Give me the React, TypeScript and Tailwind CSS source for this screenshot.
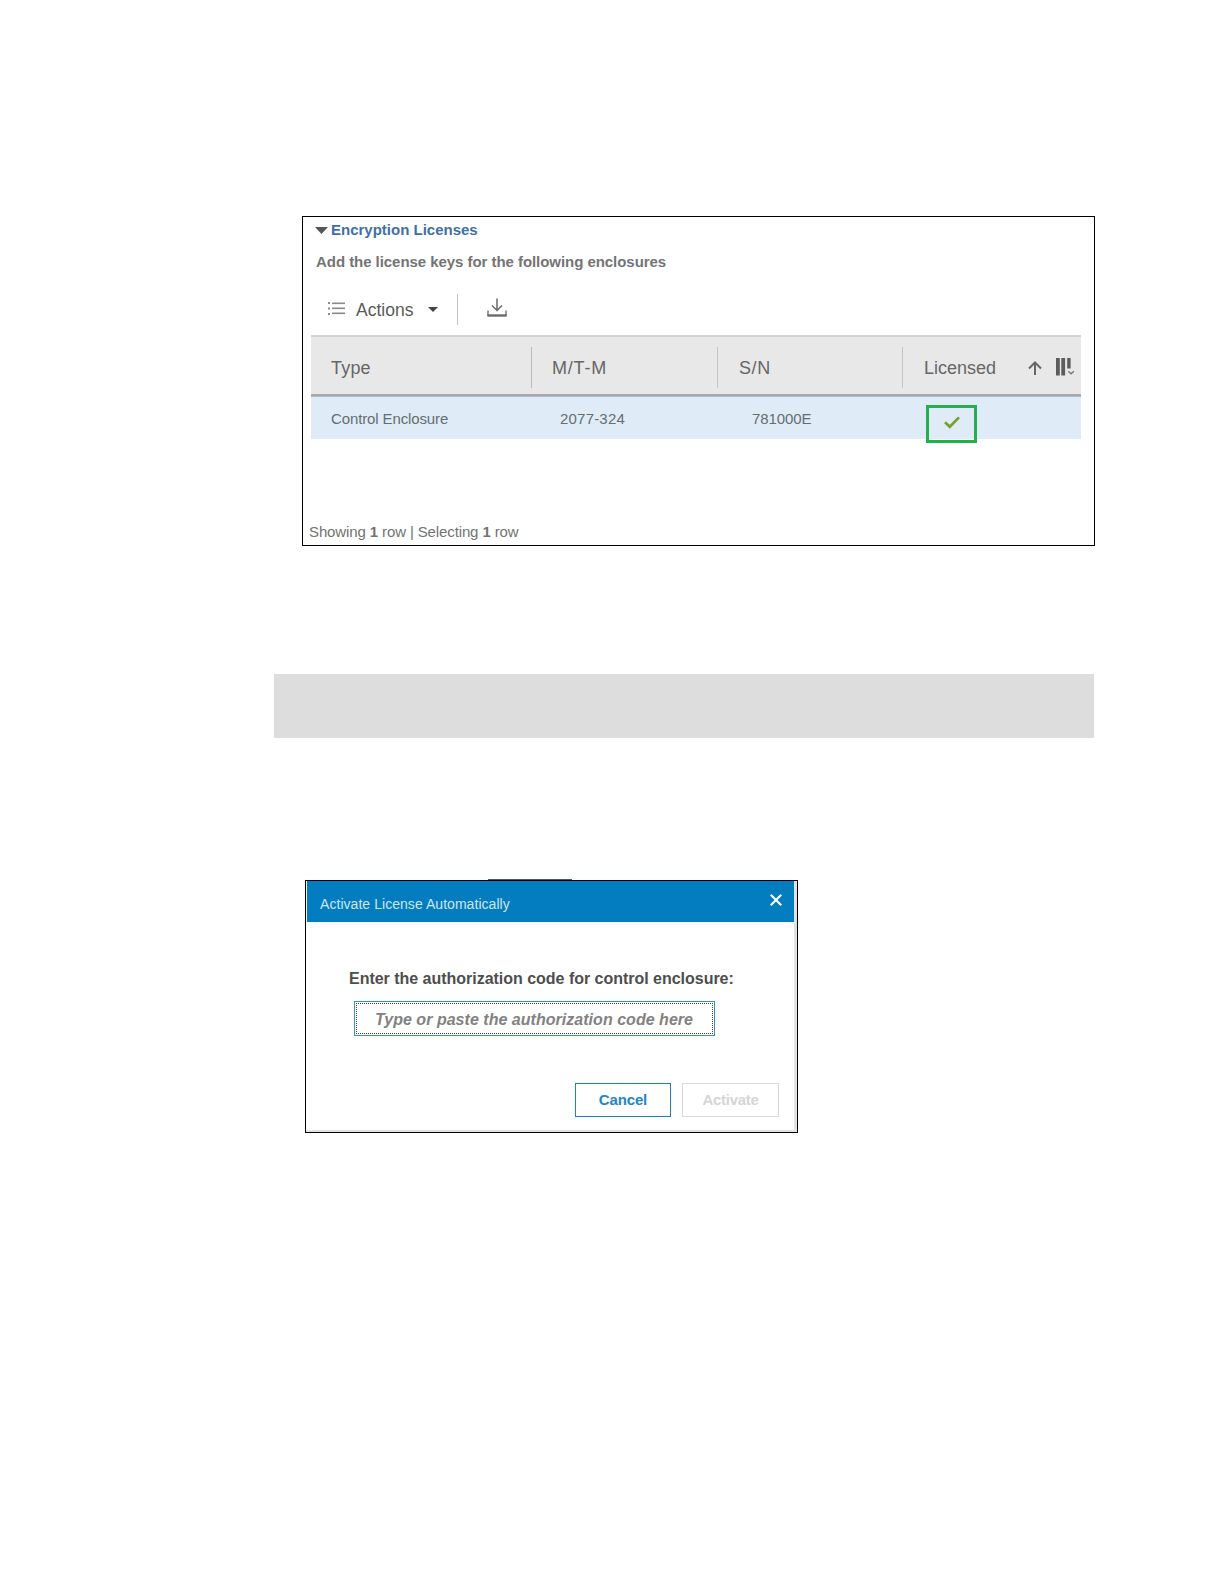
import React from 'react';

const ListIcon = () => (
  <svg width="18" height="15" viewBox="0 0 18 15" fill="#8a8a8a">
    <rect x="0" y="0" width="2" height="2" />
    <rect x="0" y="5.5" width="2" height="2" />
    <rect x="0" y="11" width="2" height="2" />
    <rect x="4" y="0.5" width="13" height="1.6" />
    <rect x="4" y="5.5" width="13" height="1.6" />
    <rect x="4" y="10.5" width="13" height="1.6" />
  </svg>
);

const DownloadIcon = () => (
  <svg width="20" height="20" viewBox="0 0 20 20" fill="none" stroke="#6a6a6a">
    <path d="M10 .5v12M5 7.5l5 5 5-5" strokeWidth="1.5" />
    <path d="M1 12.5v5.2M19 12.5v5.2" strokeWidth="1.3" />
    <path d="M.4 17.5h19.2" strokeWidth="2.4" />
  </svg>
);

const ArrowUpIcon = () => (
  <svg width="14" height="14" viewBox="0 0 14 14" fill="none" stroke="#666" strokeWidth="2">
    <path d="M7 14V1.5M1 7.5l6-6 6 6" />
  </svg>
);

const ColumnsIcon = () => (
  <svg width="19" height="19" viewBox="0 0 19 19" fill="#5c5c5c">
    <rect x="0" y="0" width="3.8" height="17.5" />
    <rect x="5.3" y="0" width="3.8" height="17.5" />
    <rect x="11.2" y="0" width="3.4" height="10.5" />
    <path d="M12.3 13.2l2.8 2.5 2.8-2.5" fill="none" stroke="#777" strokeWidth="1.4" />
  </svg>
);

const CheckIcon = () => (
  <svg width="16" height="13" viewBox="0 0 16 13" fill="none" stroke="#73a22e" strokeWidth="2.7">
    <path d="M1 6.2l4.8 4.6L15 1.4" />
  </svg>
);

const CloseIcon = () => (
  <svg width="12" height="12" viewBox="0 0 12 12" fill="none" stroke="#fff" strokeWidth="2">
    <path d="M.8.8l10.4 10.4M11.2.8L.8 11.2" />
  </svg>
);

const LicensePanel = () => (
  <div className="ml-[302px] flex h-[330px] w-[793px] flex-col border border-black bg-white">
    <div className="mt-[3px] ml-3 flex h-5 items-center">
      <svg width="13" height="7" viewBox="0 0 13 7" fill="#555">
        <path d="M0 0h13L6.5 7z" />
      </svg>
      <span className="ml-[3px] text-[15px] leading-5 font-bold text-[#3f6fa8]">Encryption Licenses</span>
    </div>
    <p className="mt-3 ml-[13px] text-[15px] leading-5 font-bold tracking-[-0.05px] text-[#747474]">
      Add the license keys for the following enclosures
    </p>

    <div className="mt-[22px] ml-[25px] flex h-[31px] items-center">
      <ListIcon />
      <span className="ml-[10px] text-[17.5px] leading-5 text-[#5a5a5a]">Actions</span>
      <svg className="ml-[15px]" width="10" height="5" viewBox="0 0 10 5" fill="#444">
        <path d="M0 0h10L5 5z" />
      </svg>
      <div className="ml-[19px] h-[31px] w-px bg-[#c4c4c4]" />
      <div className="mb-[3px] ml-[29px]">
        <DownloadIcon />
      </div>
    </div>

    <div className="mt-[10px] ml-2 w-[770px]">
      <div className="flex h-[59px] border-t-2 border-[#d2d2d2] bg-[#e8e8e8] pt-[10px] text-[18px] text-[#666]">
        <div className="flex h-[41px] w-[221px] items-center border-r border-[#c0b8b8] pt-0.5 pl-5 tracking-[0.2px]">Type</div>
        <div className="flex h-[41px] w-[186px] items-center border-r border-[#c4c4c4] pt-0.5 pl-5 tracking-[0.8px]">M/T-M</div>
        <div className="flex h-[41px] w-[185px] items-center border-r border-[#c4c4c4] pt-0.5 pl-[21px] tracking-[0.6px]">S/N</div>
        <div className="flex h-[41px] items-center pl-[21px]">
          <span className="w-[104px] pt-0.5">Licensed</span>
          <ArrowUpIcon />
          <div className="ml-[14px] h-[19px]">
            <ColumnsIcon />
          </div>
        </div>
      </div>
      <div className="h-[3px] border-t-2 border-[#aaa5a7] bg-[#a9bedb]" />
      <div className="flex h-[42px] items-center bg-[#dfecf7] text-[15px] text-[#666c72]">
        <div className="w-[228px] pt-[3px] pl-5 tracking-[-0.12px]">Control Enclosure</div>
        <div className="w-[193px] pt-[3px] pl-[21px] tracking-[0.2px]">2077-324</div>
        <div className="w-[193px] pt-[3px] pl-5 tracking-[-0.08px]">781000E</div>
        <div className="relative h-full">
          <div className="absolute top-2 left-px flex h-[38px] w-[51px] items-center justify-center border-[3.5px] border-[#22b04b] pb-[3px]">
            <CheckIcon />
          </div>
        </div>
      </div>
    </div>

    <p className="mt-[83px] ml-1.5 text-[15px] leading-5 tracking-[-0.12px] text-[#737373]">
      Showing <b>1</b> row | Selecting <b>1</b> row
    </p>
  </div>
);

const ActivateDialog = () => (
  <div className="ml-[305px] h-[253px] w-[493px] border border-black bg-[#e2e2e2]">
    <div className="h-[249px] w-[488px] bg-white">
      <div className="ml-px flex h-[41px] justify-between bg-[#037cc0] pr-[12px] pl-[13px]">
        <span className="mt-[13px] text-[14px] leading-5 tracking-[0.05px] text-[#cde6f6]">Activate License Automatically</span>
        <div className="mt-[13px]">
          <CloseIcon />
        </div>
      </div>
      <label className="mt-[47px] ml-[43px] block text-[16px] leading-5 font-bold tracking-[-0.02px] text-[#4e4e4e]">
        Enter the authorization code for control enclosure:
      </label>
      <div className="mt-3 ml-12 h-[35px] w-[361px] border border-[#3b8ecb] p-px">
        <div className="flex h-full items-center border border-dotted border-[#444] pt-0.5 pl-[18px] text-[16px] font-bold tracking-[0.03px] text-[#828282] italic">
          Type or paste the authorization code here
        </div>
      </div>
      <div className="mt-[47px] mr-[15px] flex justify-end gap-[11px] text-[15px] font-bold">
        <button className="h-[34px] w-[96px] border border-[#1c83c0] tracking-[-0.15px] text-[#2486c4]">Cancel</button>
        <button className="h-[34px] w-[97px] border border-[#dadada] tracking-[-0.3px] text-[#d5d5d5]">Activate</button>
      </div>
    </div>
  </div>
);

const App = () => {
  return (
    <div className="h-[1584px] w-[1224px] bg-white pt-[216px] font-['Liberation_Sans',Arial,sans-serif]">
      <LicensePanel />
      <div className="mt-32 ml-[274px] h-16 w-[820px] bg-[#ddd]" />
      <div className="mt-[141px] ml-[488px] h-px w-[84px] bg-[#555]" />
      <ActivateDialog />
    </div>
  );
};

export default App;
